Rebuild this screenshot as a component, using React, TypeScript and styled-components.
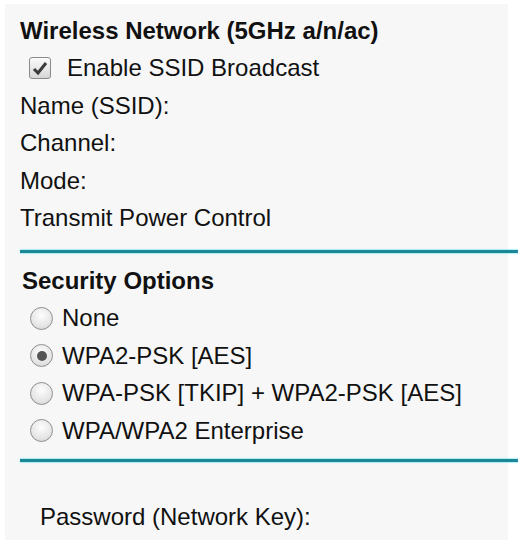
import * as React from 'react';
import styled, {createGlobalStyle} from 'styled-components';

const GlobalStyle = createGlobalStyle`
	html, body {
		margin: 0;
		background: #ffffff;
	}
	body {
		font-family: "Liberation Sans", Arial, sans-serif;
		color: #111;
	}
`;

const Panel = styled.div`
	margin: 4px 10px 8px 5px;
	padding: 8px 0 4px 0;
	background: #f7f7f7;
`;

const Title = styled.div<{ $indent: number }>`
	font-size: 24px;
	font-weight: bold;
	line-height: 37.5px;
	padding-left: ${p => p.$indent}px;
`;

const Row = styled.label<{ $indent: number }>`
	display: flex;
	align-items: center;
	height: 37.5px;
	font-size: 24px;
	padding-left: ${p => p.$indent}px;
	white-space: nowrap;
`;

const Divider = styled.div<{ $top: number; $bottom: number }>`
	height: 3px;
	margin: ${p => p.$top}px -10px ${p => p.$bottom}px 15px;
	background: #1d8796;
	box-shadow: 0 -1px 1px rgba(120, 230, 240, 0.6), 0 1px 1px rgba(120, 230, 240, 0.6);
`;

const CheckBox = styled.span`
	box-sizing: border-box;
	width: 22px;
	height: 22px;
	margin-right: 16px;
	border: 1px solid #8a8a8a;
	border-radius: 3px;
	background: linear-gradient(#fbfbfb, #d6d6d6);
	display: inline-flex;
	align-items: center;
	justify-content: center;
	flex-shrink: 0;
`;

const Radio = styled.span<{ $checked?: boolean }>`
	box-sizing: border-box;
	width: 23px;
	height: 23px;
	margin-right: 9px;
	border: 1px solid #8f8f8f;
	border-radius: 50%;
	background: radial-gradient(circle at 50% 35%, #fdfdfd 0%, #e6e6e6 60%, #cfcfcf 100%);
	display: inline-flex;
	align-items: center;
	justify-content: center;
	flex-shrink: 0;

	&::after {
		content: '';
		display: ${p => (p.$checked ? 'block' : 'none')};
		width: 10px;
		height: 10px;
		border-radius: 50%;
		background: #555;
	}
`;

const options = [
	'None',
	'WPA2-PSK [AES]',
	'WPA-PSK [TKIP] + WPA2-PSK [AES]',
	'WPA/WPA2 Enterprise',
];

const App: React.FC = () =>
	<>
		<GlobalStyle />
		<Panel>
			<Title $indent={15}>Wireless Network (5GHz a/n/ac)</Title>
			<Row $indent={24}>
				<CheckBox>
					<svg width="16" height="15" viewBox="0 0 16 15">
						<path d="M2 8 L6 12 L14 2" fill="none" stroke="#3a3a3a" strokeWidth="3" />
					</svg>
				</CheckBox>
				Enable SSID Broadcast
			</Row>
			<Row $indent={15}>Name (SSID):</Row>
			<Row $indent={15}>Channel:</Row>
			<Row $indent={15}>Mode:</Row>
			<Row $indent={15}>Transmit Power Control</Row>
			<Divider $top={13} $bottom={9} />
			<Title $indent={17}>Security Options</Title>
			{options.map((o, i) =>
				<Row key={o} $indent={25}>
					<Radio $checked={i === 1} />
					{o}
				</Row>
			)}
			<Divider $top={9} $bottom={37} />
			<Row $indent={35}>Password (Network Key):</Row>
		</Panel>
	</>;

export default App;
